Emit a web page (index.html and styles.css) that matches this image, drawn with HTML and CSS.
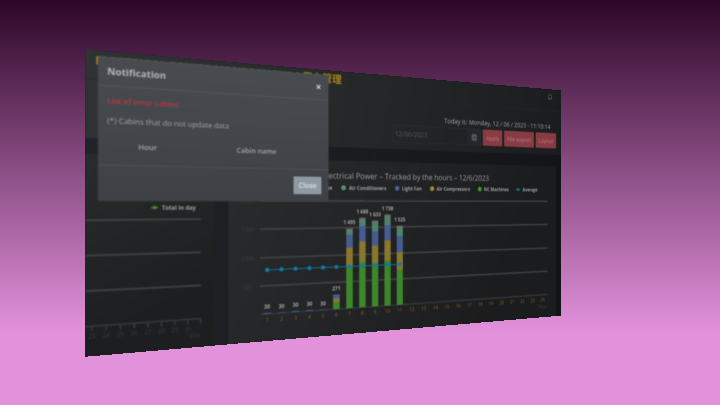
FILE: index.html
```html
<!DOCTYPE html>
<html lang="en">
<head>
<meta charset="utf-8">
<title>Electrical Power Management</title>
<link rel="stylesheet" href="styles.css">
</head>
<body>
<div class="scene">
<main class="panel">
  <header class="header">
    <div class="topbar">
      <h1 class="brand">ELECTRICAL POWER MANAGEMENT | 電力管理</h1>
      <button class="bell" type="button" aria-label="Alerts">
        <svg viewBox="0 0 16 18" width="14" height="16"><path d="M8 2v1M3 13V8a5 5 0 0 1 10 0v5l1 1H2zM6.500 16h3" fill="none" stroke="currentColor" stroke-width="1.500"/></svg>
      </button>
    </div>
    <div class="tools">
      <p class="today">Today is: Monday, 12 / 06 / 2023 - 11:10:14</p>
      <form class="filters">
        <div class="date">
          <input class="date-input" type="text" value="12/06/2023" aria-label="Date">
          <button class="date-button" type="button" aria-label="Pick a date">
            <svg viewBox="0 0 12 14" width="12" height="14"><path d="M1 2h10v11H1zM1 5h10M4 0v3M8 0v3M4 7v5M8 7v5" fill="none" stroke="currentColor" stroke-width="1.500"/></svg>
          </button>
        </div>
        <button class="action" type="button">Apply</button>
        <button class="action" type="button">File export</button>
        <button class="action" type="button">Layout</button>
      </form>
    </div>
  </header>

  <section class="cards">
    <article class="card card-day">
      <div class="legend legend-day"><span class="line-mark green"></span>Total in day</div>
      <svg class="chart" id="day-chart" viewBox="0 0 213 240"></svg>
    </article>
    <article class="card card-hour">
      <h2 class="chart-title">Electrical Power – Tracked by the hours – 12/6/2023</h2>
      <ul class="legend legend-hour">
        <li><span class="dot red"></span>Warehouse</li>
        <li><span class="dot teal"></span>Air Conditioners</li>
        <li><span class="dot blue"></span>Light Fan</li>
        <li><span class="dot yellow"></span>Air Compressors</li>
        <li><span class="dot green"></span>NC Machines</li>
        <li><span class="line-mark cyan"></span>Average</li>
      </ul>
      <svg class="chart" id="hour-chart" viewBox="0 0 746 275"></svg>
    </article>
  </section>

  <section class="modal" role="dialog" aria-labelledby="modal-title">
    <div class="modal-head">
      <h2 class="modal-title" id="modal-title">Notification</h2>
      <button class="modal-x" type="button" aria-label="Dismiss">×</button>
    </div>
    <div class="modal-body">
      <p class="error">List of error cabins</p>
      <p class="note">(*) Cabins that do not update data</p>
      <table class="cabins">
        <thead><tr><th>Hour</th><th>Cabin name</th></tr></thead>
      </table>
    </div>
    <div class="modal-foot"><button class="close" type="button">Close</button></div>
  </section>
</main>
</div>
<script src="charts.js"></script>
</body>
</html>
```
FILE: styles.css
```css
* { box-sizing: border-box; }
body { margin: 0; font-family: "Open Sans", "Noto Sans CJK TC", sans-serif; color: #a4a6a8; }
.scene {
  display: flex;
  align-items: center;
  justify-content: center;
  height: 100vh;
  overflow: hidden;
  perspective: calc(100vw * 5 / 6);
  background: linear-gradient(#2d0728 0%, #e291db 82%);
}
h1, h2, p, ul { margin: 0; padding: 0; }
button, input { font: inherit; color: inherit; border: 0; padding: 0; background: none; }

.panel {
  position: relative;
  display: flex;
  flex: none;
  flex-direction: column;
  width: calc(100vw * 25 / 18);
  aspect-ratio: 25 / 13;
  overflow: hidden;
  transform: rotateY(21.7deg) scale(0.5);
  background: linear-gradient(90deg, #202327, #121417);
}
.header, .cards, .modal { filter: blur(1px); }

.header {
  height: 150px;
  background: linear-gradient(100deg, #303334, #252728 50%, #1a1c1d);
}
.topbar {
  display: flex;
  align-items: center;
  justify-content: space-between;
  height: 50px;
  padding: 0 25px 16px 15px;
  border-bottom: 1px solid #242628;
}
.brand { font-size: 20px; line-height: 28px; font-weight: 700; color: #a5831b; white-space: nowrap; }
.bell { display: flex; color: #66696c; }
.tools {
  display: flex;
  flex-direction: column;
  align-items: flex-end;
  gap: 4px;
  padding: 26px 15px 0 0;
}
.today { padding-right: 16px; font-size: 14px; line-height: 20px; color: #a0a2a4; }
.filters { display: flex; gap: 5px; }
.date { display: flex; width: 212px; height: 35px; border: 1px solid #2d3032; }
.date-input { flex: 1; min-width: 0; padding-left: 5px; font-size: 14px; color: #57595b; }
.date-button { display: grid; place-items: center; width: 33px; background: #25272d; color: #77797e; }
.action {
  height: 35px;
  padding: 0 8px;
  border-radius: 2px;
  background: #893b44;
  color: #b58085;
  font-size: 13px;
}

.cards {
  flex: 1;
  display: grid;
  grid-template-columns: 213fr 746fr;
  gap: 26px;
  padding: 26px 15px 0 0;
  min-height: 0;
}
.card { min-height: 0; background: linear-gradient(155deg, #292b2c, #1c1e1f 75%); }
.card-hour { background: linear-gradient(115deg, #292b2c, #1a1c1d 80%); }
.card-day { padding-top: 83px; }
.card-hour { padding-top: 18px; }
.chart { display: block; width: 100%; font-size: 10px; }
.chart-title { text-align: center; font-size: 16px; line-height: 24px; font-weight: 400; color: #9b9d9f; }
.legend { display: flex; align-items: center; font-size: 10px; line-height: 18px; font-weight: 700; color: #a0a2a4; list-style: none; }
.legend-day { gap: 6px; padding: 0 0 2px 105px; }
.legend-hour { justify-content: center; gap: 19px; padding: 3px 0 4px 78px; white-space: nowrap; }
.legend li { display: flex; align-items: center; gap: 6px; }
.dot { width: 10px; height: 10px; border-radius: 50%; background: currentColor; }
.line-mark { position: relative; width: 12px; height: 2px; background: currentColor; }
.line-mark::after {
  content: "";
  position: absolute;
  left: 3px;
  top: -2px;
  width: 6px;
  height: 6px;
  border-radius: 50%;
  background: currentColor;
}
.legend-day, .legend-hour li { text-shadow: none; }
.dot.red { color: #9c4145; }
.dot.teal { color: #569475; }
.dot.blue { color: #4a649e; }
.dot.yellow { color: #a08a30; }
.dot.green, .line-mark.green { color: #469530; }
.line-mark.cyan { color: #1478a5; }

.grid { stroke: #404244; stroke-width: 3; }
.axis { stroke: #33363b; stroke-width: 3; fill: none; }
.tick-label { fill: #3b3e41; text-anchor: middle; }
.hour-label { fill: #9a601c; text-anchor: middle; }
.bar-label { fill: #a4a6a8; text-anchor: middle; font-weight: 700; }
.average { fill: none; stroke: #126a91; stroke-width: 2; }
.point { fill: #1478a5; }

.modal {
  position: absolute;
  left: 2%;
  top: 10px;
  width: 41.300%;
  border-radius: 2px;
  background: linear-gradient(#484c51, #3e4246);
  box-shadow: 0 0 3px #4c5054;
  color: #a4a7aa;
}
.modal-head {
  display: flex;
  align-items: center;
  justify-content: space-between;
  height: 50px;
  padding: 0 14px;
  border-bottom: 2px solid #505459;
}
.modal-title { font-size: 16px; line-height: 24px; font-weight: 700; color: #b4b7ba; }
.modal-x { font-size: 20px; line-height: 20px; font-weight: 700; color: #d3d7db; }
.modal-body { padding: 14px 14px 0; height: 136px; border-bottom: 2px solid #4b4f54; }
.error { font-size: 13px; line-height: 20px; font-weight: 600; color: #c5363c; }
.note { padding-top: 14px; font-size: 13px; line-height: 20px; }
.cabins { width: 100%; margin-top: 20px; border-collapse: collapse; table-layout: fixed; font-size: 13px; line-height: 28px; }
.cabins th { padding: 0; font-weight: 600; }
.cabins th:first-child { width: 34%; }
.modal-foot { display: flex; justify-content: flex-end; padding: 13px 14px; }
.close { width: 56px; height: 34px; border-radius: 2px; background: #8f99a4; color: #dce1e5; font-size: 14px; line-height: 20px; font-weight: 600; }
```
FILE: charts.js
```js
const palette = ['#3d8629', '#8a762c', '#465c91', '#4f8269', '#8d3c40'];

const line = (x1, y1, x2, y2, cls) =>
  `<line class="${cls}" x1="${x1}" y1="${y1}" x2="${x2}" y2="${y2}"/>`;
const label = (x, y, text, cls) =>
  `<text class="${cls}" x="${x}" y="${y}">${text}</text>`;

function drawDayChart() {
  let out = '';
  [10, 70, 130].forEach(y => { out += line(0, y, 190, y, 'grid'); });
  out += line(0, 190, 190, 190, 'axis');
  for (let i = 0; i < 9; i++) {
    const x = 10 + i * 22.5;
    out += line(x, 190, x, 199, 'axis');
    if (i < 8) out += label(x, 211, 23 + i, 'tick-label');
  }
  out += label(180, 223, 'Day', 'tick-label');
  document.getElementById('day-chart').innerHTML = out;
}

function drawHourChart() {
  const left = 59, right = 722, base = 226, step = (right - left) / 24;
  const center = hour => left + step * (hour - 0.5);
  const bars = {
    1: ['30', [0, 0, 2]], 2: ['30', [0, 0, 1]], 3: ['30', [0, 0, 2]],
    4: ['30', [0, 0, 2]], 5: ['30', [0, 0, 1]], 6: ['271', [14, 7, 8]],
    7: ['1 495', [84, 36, 26, 11, 2]],
    8: ['1 688', [91, 41, 31, 15, 2]],
    9: ['1 633', [87, 36, 29, 20, 2]],
    10: ['1 738', [92, 41, 31, 20, 2]],
    11: ['1 525', [72, 36, 33, 20, 2]]
  };
  let out = '';
  [['2,000', 13], ['1,500', 66], ['1,000', 120], ['500', 173]].forEach(([text, y]) => {
    out += line(left, y, right, y, 'grid') + label(36, y + 4, text, 'tick-label');
  });
  out += line(left, base, right, base, 'axis');
  for (let hour = 1; hour <= 24; hour++) {
    out += label(center(hour), 241, hour, 'hour-label');
  }
  Object.entries(bars).forEach(([hour, [text, parts]]) => {
    const x = center(hour);
    let y = base;
    parts.forEach((h, i) => {
      y -= h;
      out += `<rect x="${x - 7}" y="${y}" width="14" height="${h}" fill="${palette[i]}"/>`;
    });
    out += label(x, y - 8, text, 'bar-label');
  });
  const hours = Object.keys(bars);
  out += `<polyline class="average" points="${hours.map(h => center(h) + ',143').join(' ')}"/>`;
  hours.forEach(h => { out += `<circle class="point" cx="${center(h)}" cy="143" r="4"/>`; });
  out += label(707, 257, 'Hour', 'tick-label');
  document.getElementById('hour-chart').innerHTML = out;
}

drawDayChart();
drawHourChart();
```
